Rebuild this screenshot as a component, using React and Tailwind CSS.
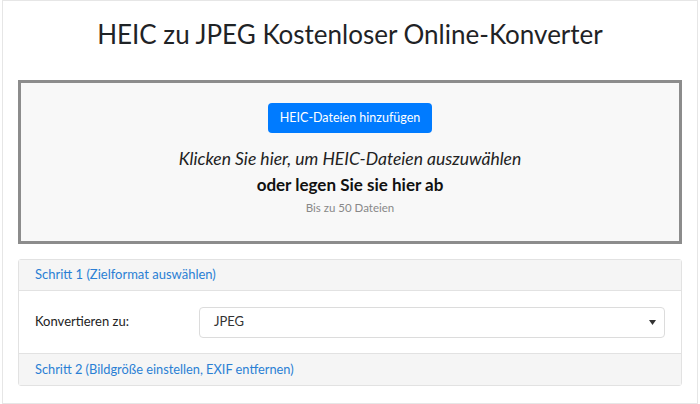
const App = () => {
  return (
    <div className="min-h-screen bg-white pl-[2px] pr-[2px]" style={{ fontFamily: "Lato, 'Open Sans', sans-serif" }}>
      <div className="min-h-[404px] border border-[#e6e6e6] px-[15px] text-[#212529]">
        {/* TITLE */}
        <h1 className="text-center text-[26px] leading-[32px] pt-[17px] pb-[30px] text-[#1f2326]">
          HEIC zu JPEG Kostenloser Online-Konverter
        </h1>

        {/* DROPZONE */}
        <div className="h-[164px] border-[3px] border-[#8c8c8c] bg-[#f8f8f8] flex flex-col items-center pt-[20px]">
          <button className="h-[30px] w-[164px] rounded bg-[#007bff] text-white text-[12.5px]">
            HEIC-Dateien hinzufügen
          </button>
          <p className="italic text-[17.5px] leading-[22px] mt-[15px] text-[#222]">
            Klicken Sie hier, um HEIC-Dateien auszuwählen
          </p>
          <p className="font-bold text-[17px] leading-[22px] mt-[4px] text-[#111]">
            oder legen Sie sie hier ab
          </p>
          <p className="text-[11.5px] leading-[18px] mt-[3px] text-[#888]">
            Bis zu 50 Dateien
          </p>
        </div>

        {/* STEPS */}
        <div className="mt-[15px] border border-[#e2e2e2] rounded-[3px]">
          <div className="h-[31px] bg-[#f5f5f5] border-b border-[#e2e2e2] flex items-center px-[16px] text-[13px] text-[#2a7fd4]">
            Schritt 1 (Zielformat auswählen)
          </div>
          <div className="h-[62px] flex items-center px-[16px]">
            <span className="w-[164px] text-[13px] text-[#222]">Konvertieren zu:</span>
            <div className="flex-1 h-[31px] border border-[#dcdcdc] rounded flex items-center justify-between pl-[14px] pr-[8px] text-[13px] text-[#333]">
              <span>JPEG</span>
              <svg width="7" height="5" viewBox="0 0 7 5">
                <path d="M0 0h7L3.5 5z" fill="#333" />
              </svg>
            </div>
          </div>
          <div className="h-[32px] bg-[#f5f5f5] border-t border-[#e2e2e2] flex items-center px-[16px] text-[12.8px] text-[#2a7fd4]">
            Schritt 2 (Bildgröße einstellen, EXIF entfernen)
          </div>
        </div>
      </div>
    </div>
  );
};

export default App;
